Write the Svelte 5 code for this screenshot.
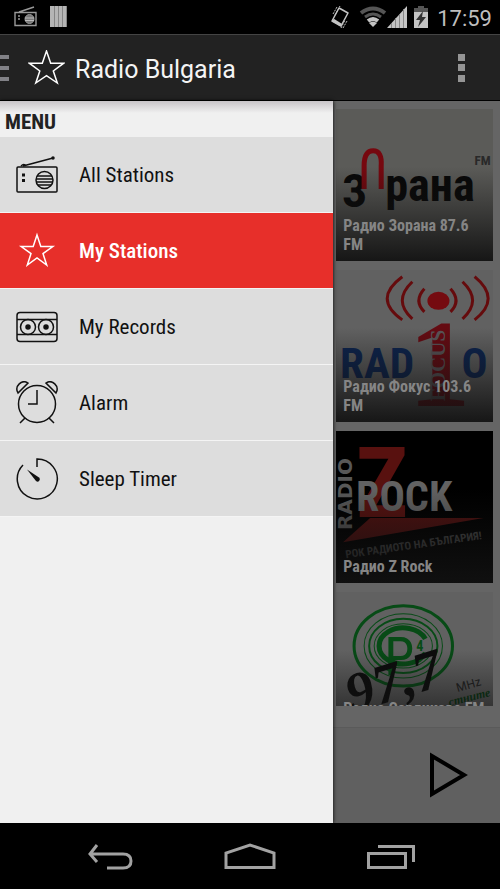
<script>
	let active = $state('My Stations');

	const menu = ['All Stations', 'My Stations', 'My Records', 'Alarm', 'Sleep Timer'];

	const stations = [
		{ id: 'zorana', name: 'Радио Зорана 87.6 FM' },
		{ id: 'focus', name: 'Радио Фокус 103.6 FM' },
		{ id: 'zrock', name: 'Радио Z Rock' },
		{ id: 'serdika', name: 'Радио Сердикова FM' }
	];
</script>

<div class="phone">
	<div class="status">
		<div class="status-group">
			<svg width="24" height="22" viewBox="0 0 24 22" fill="none" stroke="#999">
				<path d="M1 6.5h21v13H1zM5 6l15-5" stroke-width="1.4" />
				<circle cx="15.500" cy="13" r="4.500" fill="#777" />
				<path d="M11 12h9M11 14.500h9" stroke="#bbb" />
				<path d="M4 10h2M4 13h2" stroke-width="1.500" />
			</svg>
			<svg width="18" height="22" viewBox="0 0 18 22">
				<path d="M0 0h17v21H0z" fill="#b5b5b5" />
				<path d="M4.500 0v21M8.500 0v21M12.500 0v21M16.500 0v21" stroke="#858585" />
			</svg>
		</div>
		<div class="status-group right">
			<svg class="vibrate" width="22" height="24" viewBox="0 0 22 24" fill="none" stroke="#c4c4c4">
				<path d="M10 3l9 5-7 13-9-5z" stroke-width="1.500" stroke-linejoin="round" />
				<path d="M4 15l8 5" stroke-width="3" />
				<path d="M4 9l4-7M6 10l5-9M14 23l4-7M12 23l4-8" stroke-dasharray="2 1" />
			</svg>
			<svg class="wifi" width="28" height="22" viewBox="0 0 28 22" fill="none" stroke-width="3">
				<path d="M2 7q12-9 24 0" stroke="#555" stroke-width="4" />
				<path d="M6 11q8-6 16 0" stroke="#555" />
				<path d="M9 15q5-4 10 0" stroke="#c4c4c4" stroke-width="4" />
				<path d="M10 17q4-3 8 0l-4 4z" fill="#c4c4c4" />
			</svg>
			<svg width="20" height="22" viewBox="0 0 20 22">
				<path d="M0 22L20 0v22z" fill="#c4c4c4" />
				<path d="M4.500 17v5M8.500 12v10M12.500 8v14M16.500 3v19" stroke="#888" />
			</svg>
			<svg class="battery" width="16" height="23" viewBox="0 0 16 23">
				<path d="M5 0h6v2h4v4H1V2h4z" fill="#555" />
				<path d="M1 6h14v16H1z" fill="#c4c4c4" />
				<path d="M10 5l-7 9h4l-2 7 8-10H9z" fill="#333" />
			</svg>
			<span class="clock">17:59</span>
		</div>
	</div>

	<header>
		<button class="drawer-toggle" aria-label="Close menu">
			<svg width="9" height="28" viewBox="0 0 9 28" fill="#818186">
				<path d="M0 1h9v4H0zM0 12h9v4H0zM0 23h9v4H0z" />
			</svg>
		</button>
		<svg class="logo" width="37" height="36" viewBox="0 0 37 36" fill="none" stroke="#fff" stroke-width="1.500">
			<path d="M18.500 1l4.200 12.200h13L25.300 21l4 12-10.800-7.300L7.800 33l4-12L1.300 13.200h13z" />
		</svg>
		<h1>Radio Bulgaria</h1>
		<button class="more" aria-label="More options">
			<svg width="9" height="28" viewBox="0 0 9 28" fill="#959595">
				<path d="M1 0h7v7H1zM1 10h7v7H1zM1 21h7v7H1z" />
			</svg>
		</button>
	</header>

	<main>
		<nav class="drawer">
			<h2>MENU</h2>
			<ul>
				{#each menu as item}
					<li>
						<button class="item" class:active={active === item} onclick={() => (active = item)}>
							<svg width="44" height="44" viewBox="0 0 44 44" fill="none" stroke="currentColor" stroke-width="1.500">
								{#if item === 'All Stations'}
									<rect x="2" y="14" width="40" height="25" rx="1" />
									<path d="M8 13l30-8M6 13q3-3 5 0" />
									<circle cx="38" cy="5" r="1" fill="currentColor" />
									<circle cx="29.500" cy="27" r="8.500" />
									<path d="M22 23h15M21 26h17M21 29h17M23 32h13" />
									<path d="M7 22h3M7 27.500h3" stroke-width="3" />
								{:else if item === 'My Stations'}
									<path d="M22 6l3.800 11.500h12L28 24.600 31.700 36 22 29l-9.700 7L16 24.600 6.200 17.500h12z" />
								{:else if item === 'My Records'}
									<rect x="2" y="7.500" width="40" height="29" rx="3" />
									<path d="M2 14.500h40M2 29.500h40" />
									<circle cx="13" cy="22" r="7.500" />
									<circle cx="31" cy="22" r="7.500" />
									<circle cx="13" cy="22" r="2" fill="currentColor" />
									<circle cx="31" cy="22" r="2" fill="currentColor" />
								{:else if item === 'Alarm'}
									<circle cx="22" cy="23" r="18.500" />
									<path d="M22 9v14h-9M10 37l-5 5M34 37l5 5" />
									<path d="M3 12C-1 5 7-2 13 2zM41 12C45 5 37-2 31 2z" />
								{:else}
									<path d="M22 10V2a20 20 0 1 1-14 6" />
									<path d="M12 12.500l12 8a2 2 0 0 1-3 3.500z" fill="currentColor" stroke="none" />
								{/if}
							</svg>
							<span>{item}</span>
						</button>
					</li>
				{/each}
			</ul>
		</nav>

		<section class="content">
			<div class="stations">
				{#each stations as station}
					<a class="card {station.id}" href="#{station.id}">
						<svg viewBox="0 0 156 152" preserveAspectRatio="xMidYMid slice" aria-hidden="true">
							{#if station.id === 'zorana'}
								<g fill="#080808" class="narrow">
									<text x="6" y="98" font-size="46">З</text>
									<text x="49" y="92" font-size="46">рана</text>
									<text x="138" y="56" font-size="13" fill="#292929">FM</text>
								</g>
								<path d="M28 80V57q0-15 9-15t8 15v23" fill="none" stroke="#76080f" stroke-width="5" />
							{:else if station.id === 'focus'}
								<g fill="none" stroke="#650b0d" stroke-width="3">
									<path d="M88 19q-11 12 0 23M76 12q-20 19 0 37M66 7q-30 22 0 43" />
									<path d="M114 19q11 12 0 23M126 12q20 19 0 37M138 7q27 22 0 43" />
								</g>
								<ellipse cx="102" cy="31" rx="11" ry="9" fill="#750b10" />
								<text x="4" y="108" font-size="43" fill="#0c2450" class="narrow">RAD</text>
								<text x="125" y="108" font-size="43" fill="#0c2450" class="narrow">O</text>
								<text x="72" y="136" font-size="124" fill="#650b12" class="serif">1</text>
								<text transform="translate(109 131) rotate(-90)" font-size="21" fill="#5a5558" class="serif">FOCUS</text>
							{:else if station.id === 'zrock'}
								<text x="20" y="86" font-size="98" fill="#58110f" class="narrow">Z</text>
								<path d="M7 111L34 87L147 87z" fill="#50100f" />
								<text x="20" y="80" font-size="42" fill="#626262" class="narrow">ROCK</text>
								<text transform="translate(16 99) rotate(-90)" font-size="20" fill="#585858" class="wide">RADIO</text>
								<text transform="translate(10 127) rotate(-8)" font-size="11" fill="#484848" class="narrow">РОК РАДИОТО НА БЪЛГАРИЯ!</text>
							{:else}
								<g fill="none" stroke="#074b16">
									<ellipse cx="67" cy="54" rx="49" ry="40" stroke-width="3" />
									<ellipse cx="67" cy="54" rx="39" ry="32" />
									<ellipse cx="67" cy="54" rx="34" ry="27" stroke-width="2" />
									<ellipse cx="67" cy="54" rx="29" ry="22" />
									<path d="M89 47A24 18 0 1 0 89 61" stroke-width="5" />
								</g>
								<text x="48" y="83" font-size="54" fill="#074b16">Р</text>
								<text x="80" y="59" font-size="14" fill="#074b16" class="narrow">4</text>
								<text transform="translate(16 121) rotate(-17)" font-size="56" fill="#0c0c0c" class="script">97,7</text>
								<text transform="translate(121 100) rotate(-16)" font-size="12" fill="#222" class="light">МHz</text>
								<text transform="translate(113 114) rotate(-14)" font-size="12" fill="#063b12" class="script">стните</text>
							{/if}
						</svg>
						<span class="caption">{station.name}</span>
					</a>
				{/each}
			</div>
			<div class="player">
				<button aria-label="Play">
					<svg width="42" height="48" viewBox="0 0 42 48" fill="none" stroke="#000" stroke-width="4">
						<path d="M4 4v38l32-19z" />
					</svg>
				</button>
			</div>
		</section>
	</main>

	<footer>
		<button aria-label="Back">
			<svg width="48" height="28" viewBox="0 0 48 28" fill="none" stroke="#a2a2a2" stroke-width="3">
				<path d="M12 3L5 12l7 8M5 12h33q8 0 8 7t-8 7H22" />
			</svg>
		</button>
		<button aria-label="Home">
			<svg width="52" height="28" viewBox="0 0 52 28" fill="none" stroke="#a2a2a2" stroke-width="3">
				<path d="M2 25.500V11l24-8 24 8v14.500z" />
			</svg>
		</button>
		<button aria-label="Recent apps">
			<svg width="48" height="26" viewBox="0 0 48 26" fill="none" stroke="#a2a2a2" stroke-width="3">
				<path d="M1.500 10.500h37v14h-37zM11 3.500h35.500V19" />
			</svg>
		</button>
	</footer>
</div>

<style>
	:global(body) {
		margin: 0;
		background: #000;
	}

	.phone {
		height: 100vh;
		display: flex;
		flex-direction: column;
		overflow: hidden;
		font-family: 'Roboto Condensed', 'Liberation Sans Narrow', Roboto, sans-serif;
	}

	svg {
		display: block;
		flex-shrink: 0;
	}

	button {
		border: 0;
		padding: 0;
		background: none;
		color: inherit;
		font: inherit;
		cursor: pointer;
	}

	.status {
		height: 34px;
		display: flex;
		align-items: center;
		justify-content: space-between;
		padding: 0 8px 0 14px;
		background: #000;
	}

	.status-group {
		display: flex;
		align-items: center;
		gap: 12px;
	}

	.status-group.right {
		gap: 0;
	}

	.vibrate,
	.battery {
		margin-right: 8px;
	}

	.battery {
		margin-left: 6px;
	}

	.clock {
		padding-top: 2px;
		font-family: Roboto, sans-serif;
		font-size: 22px;
		color: #bebebe;
	}

	header {
		height: 67px;
		box-sizing: border-box;
		display: flex;
		align-items: center;
		background: #222;
		border-top: 1px solid #444;
		border-bottom: 1px solid #000;
	}

	.logo {
		margin: 0 10px 0 19px;
	}

	h1 {
		flex: 1;
		margin: 0;
		padding-top: 4px;
		font-family: Roboto, sans-serif;
		font-size: 25px;
		font-weight: 400;
		color: #f4f4f4;
	}

	.more {
		padding: 0 34px;
	}

	main {
		flex: 1;
		min-height: 0;
		display: flex;
		background: #656565;
	}

	.drawer {
		flex: 2;
		z-index: 1;
		background: #f0f0f0 linear-gradient(#c8c4c8, #f0f0f0) no-repeat 0 0 / 100% 12px;
		box-shadow: 0 0 4px #000;
	}

	h2 {
		margin: 0;
		padding-left: 5px;
		font-size: 21px;
		line-height: 42px;
		height: 36px;
		font-weight: 700;
		color: #222;
	}

	ul {
		margin: 0;
		padding: 0;
		list-style: none;
	}

	li {
		border-bottom: 1px solid #f4f4f4;
	}

	.item {
		width: 100%;
		height: 75px;
		display: flex;
		align-items: center;
		gap: 20px;
		padding: 0 15px;
		background: #ddd;
		color: #111;
		font-size: 21px;
		text-align: left;
	}

	.item.active {
		background: #e72f2a;
		color: #fff;
		font-weight: 500;
	}

	.content {
		flex: 1;
		min-width: 0;
		display: flex;
		flex-direction: column;
	}

	.stations {
		flex: 1;
		min-height: 0;
		display: flex;
		flex-direction: column;
		gap: 9px;
		margin: 8px 7px 21px 3px;
		overflow: hidden;
	}

	.card {
		flex-shrink: 0;
		height: 152px;
		display: grid;
		overflow: hidden;
		background: #616161;
		text-decoration: none;
	}

	.card.zorana {
		background: #5b5b58;
	}

	.card.zrock {
		background: #000;
	}

	.card > * {
		grid-area: 1 / 1;
		width: 100%;
		height: 152px;
		box-sizing: border-box;
	}

	.caption {
		display: flex;
		align-items: flex-end;
		padding: 7px;
		background: linear-gradient(transparent 38%, #111e 100%);
		color: #858585;
		font-size: 16px;
		line-height: 19px;
		font-weight: 700;
	}

	.serdika .caption {
		padding-bottom: 26px;
	}

	.narrow {
		font-weight: 700;
	}

	.wide {
		font-family: 'DejaVu Sans', sans-serif;
		font-weight: 700;
	}

	.serif {
		font-family: 'Liberation Serif', serif;
		font-weight: 700;
	}

	.script {
		font-family: 'Liberation Serif', serif;
		font-style: italic;
		font-weight: 700;
	}

	.light {
		font-family: Roboto, sans-serif;
	}

	.player {
		height: 95px;
		display: flex;
		align-items: center;
		justify-content: flex-end;
		padding-right: 30px;
		background: #606060;
		border-top: 1px solid #5a5a5a;
	}

	footer {
		height: 66px;
		display: flex;
		align-items: center;
		justify-content: center;
		gap: 91px;
		background: #000;
	}
</style>
